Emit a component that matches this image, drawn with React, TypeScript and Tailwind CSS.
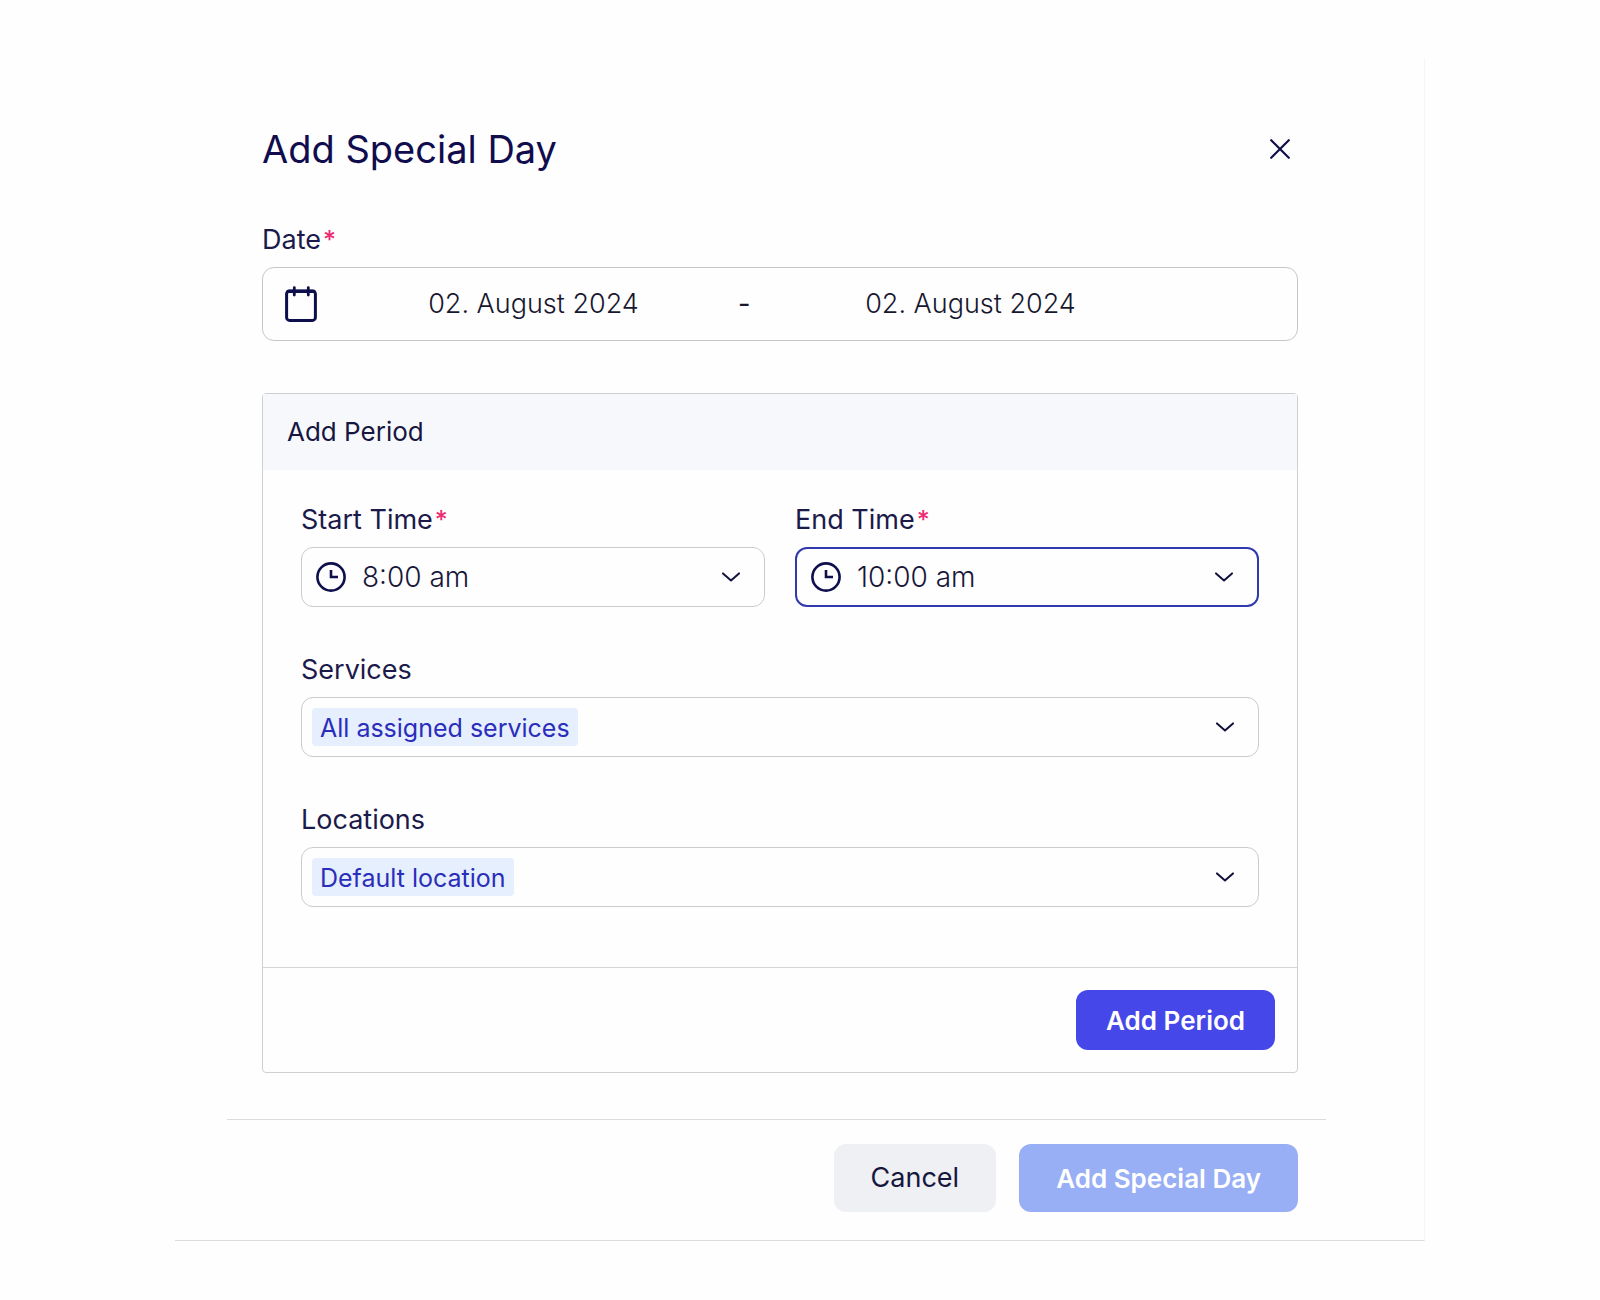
import { useState } from "react";
import type { ReactNode } from "react";

type FormData = {
  startDate: string;
  endDate: string;
  startTime: string;
  endTime: string;
  service: string;
  location: string;
};

const initialFormData: FormData = {
  startDate: "02. August 2024",
  endDate: "02. August 2024",
  startTime: "8:00 am",
  endTime: "10:00 am",
  service: "All assigned services",
  location: "Default location",
};

const times = ["8:00 am", "9:00 am", "10:00 am", "11:00 am", "12:00 pm"];

const CloseIcon = () => (
  <svg width="20" height="20" viewBox="0 0 20 20" fill="none" stroke="currentColor" strokeWidth="2.2" strokeLinecap="round">
    <path d="M1.2 1.2l17.6 17.6M18.8 1.2L1.2 18.8" />
  </svg>
);

const CalendarIcon = () => (
  <svg
    className="shrink-0 text-[#0d0f4c]"
    width="32"
    height="36"
    viewBox="0 0 32 36"
    fill="none"
    stroke="currentColor"
    strokeLinecap="round"
  >
    <rect x="1.6" y="5" width="28.8" height="29.4" rx="3" strokeWidth="3" />
    <path d="M3 5.4h26" strokeWidth="3.4" />
    <path d="M9.3 1.6v7.4M23.3 1.6v7.4" strokeWidth="2.8" />
  </svg>
);

const ClockIcon = () => (
  <svg
    className="pointer-events-none absolute top-1/2 left-[14px] -translate-y-1/2 text-[#100f4d]"
    width="30"
    height="30"
    viewBox="0 0 30 30"
    fill="none"
    stroke="currentColor"
    strokeWidth="2.6"
  >
    <circle cx="15" cy="15" r="13.6" />
    <path d="M15 8v7h7" />
  </svg>
);

const ChevronIcon = () => (
  <svg
    className="pointer-events-none absolute top-1/2 right-6 -translate-y-1/2 text-[#12113a]"
    width="18"
    height="10"
    viewBox="0 0 18 10"
    fill="none"
    stroke="currentColor"
    strokeWidth="2"
    strokeLinecap="round"
    strokeLinejoin="round"
  >
    <path d="M1 1.4l8 7 8-7" />
  </svg>
);

type FieldLabelProps = {
  htmlFor: string;
  required?: boolean;
  children: ReactNode;
};

const FieldLabel = ({ htmlFor, required, children }: FieldLabelProps) => (
  <label htmlFor={htmlFor} className="mb-[11px] block text-[27px] leading-8 text-[#1b1a4a]">
    {children}
    {required && <span className="ml-[2px] text-[25px] font-medium text-[#ee2a72]">*</span>}
  </label>
);

type SelectProps = {
  id: keyof FormData;
  value: string;
  onChange: (e: React.ChangeEvent<HTMLSelectElement>) => void;
};

const TimeSelect = ({ id, value, onChange, active }: SelectProps & { active?: boolean }) => (
  <div
    className={`relative h-[60px] rounded-xl ${active ? "border-2 border-[#3039ae]" : "border border-[#cbcbcd]"}`}
  >
    <ClockIcon />
    <select
      id={id}
      name={id}
      value={value}
      onChange={onChange}
      className="block h-full w-full appearance-none bg-transparent pr-14 pl-[60px] text-[28px] font-light text-[#17163a] outline-none"
    >
      {times.map((time) => (
        <option key={time}>{time}</option>
      ))}
    </select>
    <ChevronIcon />
  </div>
);

const TagSelect = ({ id, value, onChange }: SelectProps) => (
  <div className="relative flex h-[60px] items-center rounded-xl border border-[#cbcbcd] px-[10px]">
    <select
      id={id}
      name={id}
      value={value}
      onChange={onChange}
      className="h-[38px] appearance-none rounded bg-[#e5effd] px-2 pt-[2px] text-[25px] text-[#2b2dbb] outline-none"
    >
      <option>{value}</option>
    </select>
    <ChevronIcon />
  </div>
);

const App = () => {
  const [formData, setFormData] = useState<FormData>(initialFormData);

  const handleChange = (e: React.ChangeEvent<HTMLInputElement | HTMLSelectElement>) => {
    const { name, value } = e.target;
    setFormData((prev) => ({
      ...prev,
      [name]: value,
    }));
  };

  return (
    <div className="min-h-screen bg-[#fefefe] pt-[58px] font-['Inter',sans-serif]">
      <form
        onSubmit={(e) => e.preventDefault()}
        className="mx-auto max-w-[1250px] border-r border-b border-r-[#f6f6f6] border-b-[#dcdcdc] pt-[63px] pr-[98px] pb-7 pl-[52px]"
      >
        <div className="pr-7 pl-[35px]">
          {/* Header */}
          <div className="mb-[47px] flex items-center justify-between pr-2">
            <h1 className="text-[38px] leading-[56px] text-[#100c4e]">Add Special Day</h1>
            <button type="button" aria-label="Close" className="text-[#120f4a]">
              <CloseIcon />
            </button>
          </div>

          {/* Date */}
          <FieldLabel htmlFor="startDate" required>
            Date
          </FieldLabel>
          <div className="flex h-[74px] items-center rounded-xl border border-[#c6c6c8] pr-[126px] pl-[22px] text-[27px] text-[#17172f]">
            <CalendarIcon />
            <input
              id="startDate"
              name="startDate"
              type="text"
              value={formData.startDate}
              onChange={handleChange}
              className="ml-4 w-0 flex-1 text-center font-light outline-none"
            />
            <span className="w-9 pl-1">-</span>
            <input
              id="endDate"
              name="endDate"
              type="text"
              aria-label="End date"
              value={formData.endDate}
              onChange={handleChange}
              className="w-0 flex-1 text-center font-light outline-none"
            />
          </div>

          {/* Period */}
          <section className="mt-[52px] rounded border border-[#cfd0d2]">
            <h2 className="bg-[#f6f8fc] px-6 py-[22px] text-[26px] leading-8 text-[#17163f]">Add Period</h2>
            <div className="px-[38px] pt-[34px] pb-[60px]">
              <div className="grid grid-cols-2 gap-[30px]">
                <div>
                  <FieldLabel htmlFor="startTime" required>
                    Start Time
                  </FieldLabel>
                  <TimeSelect id="startTime" value={formData.startTime} onChange={handleChange} />
                </div>
                <div>
                  <FieldLabel htmlFor="endTime" required>
                    End Time
                  </FieldLabel>
                  <TimeSelect id="endTime" value={formData.endTime} onChange={handleChange} active />
                </div>
              </div>
              <div className="mt-[47px]">
                <FieldLabel htmlFor="service">Services</FieldLabel>
                <TagSelect id="service" value={formData.service} onChange={handleChange} />
              </div>
              <div className="mt-[47px]">
                <FieldLabel htmlFor="location">Locations</FieldLabel>
                <TagSelect id="location" value={formData.location} onChange={handleChange} />
              </div>
            </div>
            <div className="flex justify-end border-t border-[#d6d6d8] px-[22px] py-[22px]">
              <button
                type="button"
                className="h-[60px] rounded-xl bg-[#4547e9] px-[30px] text-[26px] font-semibold text-white"
              >
                Add Period
              </button>
            </div>
          </section>
        </div>

        {/* Footer */}
        <div className="mt-[46px] flex justify-end gap-[23px] border-t border-[#dcdcdc] pt-6 pr-7">
          <button type="button" className="h-[68px] rounded-xl bg-[#eef0f3] px-[37px] text-[27px] text-[#17163f]">
            Cancel
          </button>
          <button
            type="submit"
            className="h-[68px] rounded-xl bg-[#98aef5] px-[37px] text-[26px] font-semibold text-white"
          >
            Add Special Day
          </button>
        </div>
      </form>
    </div>
  );
};

export default App;
